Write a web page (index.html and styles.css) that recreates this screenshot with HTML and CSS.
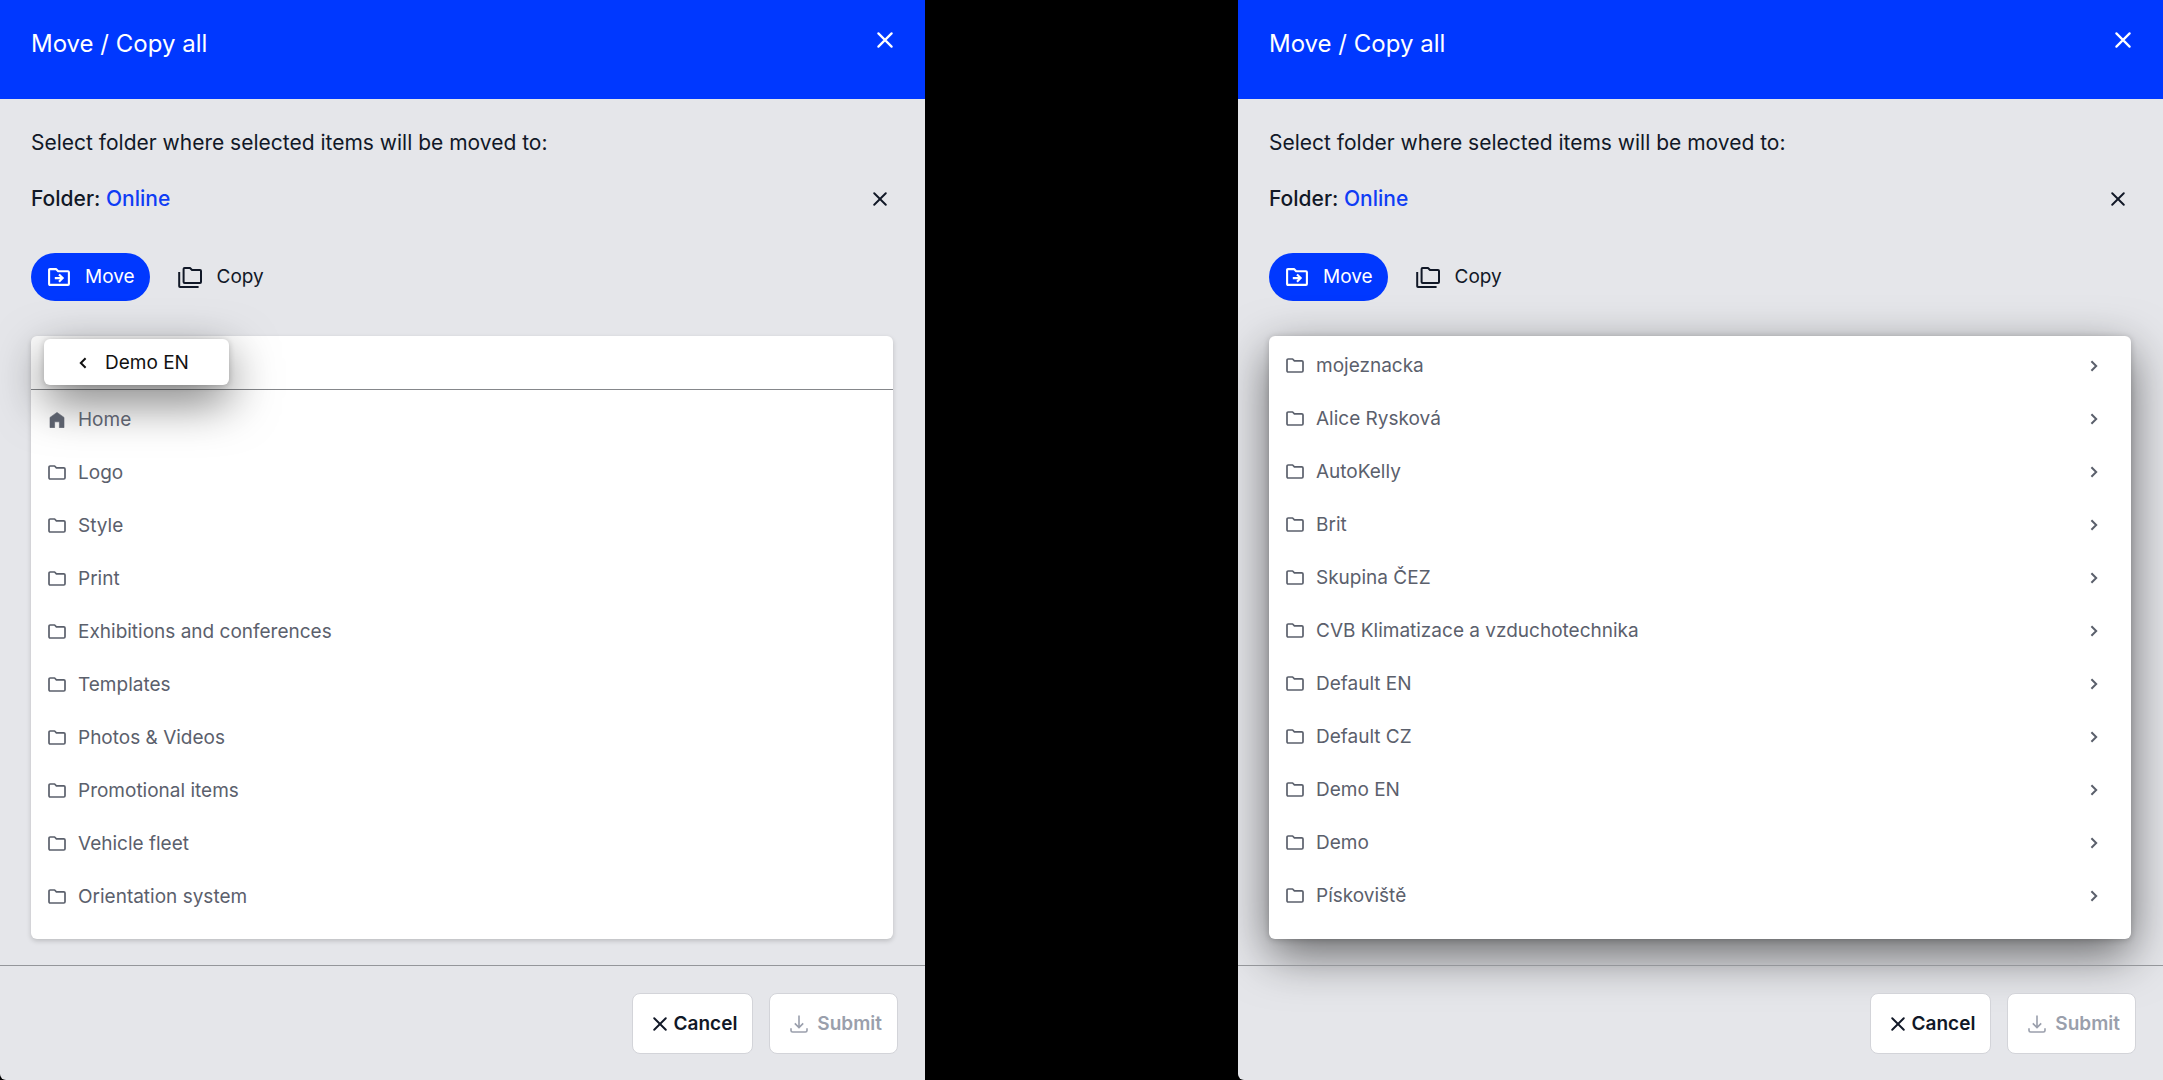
FILE: index.html
```html
<!DOCTYPE html>
<html lang="en">
<head>
<meta charset="utf-8">
<meta name="viewport" content="width=device-width, initial-scale=1">
<title>Move / Copy all</title>
<link rel="stylesheet" href="styles.css">
</head>
<body>
<svg class="sprite" aria-hidden="true">
  <symbol id="folder" viewBox="0 0 18 15"><path d="M1 2.2Q1 1 2.2 1H6.6L8.4 2.8H15.8Q17 2.8 17 4V12.8Q17 14 15.8 14H2.2Q1 14 1 12.8Z" fill="none" stroke="currentColor" stroke-width="1.7" stroke-linejoin="round"/></symbol>
  <symbol id="home" viewBox="0 0 16 16"><path d="M8 .4 15 5.4V15.7H10.4V9.8H5.6V15.7H1V5.4Z" fill="currentColor" stroke="currentColor" stroke-width=".6" stroke-linejoin="round"/></symbol>
  <symbol id="close" viewBox="0 0 16 16"><path d="M1.4 1.4 14.6 14.6M14.6 1.4 1.4 14.6" fill="none" stroke="currentColor" stroke-width="2.2" stroke-linecap="round"/></symbol>
  <symbol id="next" viewBox="0 0 8 12"><path d="M1.4 1.2 6.2 6 1.4 10.8" fill="none" stroke="currentColor" stroke-width="2"/></symbol>
  <symbol id="back" viewBox="0 0 8 12"><path d="M6.6 1.2 1.8 6 6.6 10.8" fill="none" stroke="currentColor" stroke-width="2"/></symbol>
  <symbol id="move" viewBox="0 0 22 18"><path d="M1.1 2Q1.1 1.1 2 1.1H8L10.2 3.3H20Q20.9 3.3 20.9 4.2V16Q20.9 16.9 20 16.9H2Q1.1 16.9 1.1 16Z" fill="none" stroke="currentColor" stroke-width="2.1" stroke-linejoin="round"/><path d="M6.8 10.1H14M11 6.4 14.7 10.1 11 13.8" fill="none" stroke="currentColor" stroke-width="2.1"/></symbol>
  <symbol id="copy" viewBox="0 0 24 21"><path d="M5.6 2Q5.6 1 6.6 1H12L14 3H22Q23 3 23 4V15Q23 16 22 16H6.6Q5.6 16 5.6 15Z" fill="none" stroke="currentColor" stroke-width="2" stroke-linejoin="round"/><path d="M1.2 5V19.2Q1.2 20 2 20H20.6" fill="none" stroke="currentColor" stroke-width="2"/></symbol>
  <symbol id="download" viewBox="0 0 18 18"><path d="M9 .6V12.4M4.8 8.4 9 12.6 13.2 8.4M1 13.2V15.4Q1 17 2.6 17H15.4Q17 17 17 15.4V13.2" fill="none" stroke="currentColor" stroke-width="1.6"/></symbol>
</svg>
<main class="screens">
  <section class="dialog" aria-label="Folder contents">
    <header class="dialog-header">
      <h1>Move / Copy all</h1>
      <button class="close" aria-label="Close"><svg class="i16"><use href="#close"/></svg></button>
    </header>
    <div class="dialog-body">
      <p class="prompt">Select folder where selected items will be moved to:</p>
      <div class="target">
        <p>Folder: <a href="#">Online</a></p>
        <button class="clear" aria-label="Clear folder"><svg class="i14"><use href="#close"/></svg></button>
      </div>
      <div class="modes">
        <button class="mode mode-active"><svg class="i-move"><use href="#move"/></svg>Move</button>
        <button class="mode"><svg class="i-copy"><use href="#copy"/></svg>Copy</button>
      </div>
      <div class="card">
        <div class="card-top">
          <button class="back"><svg class="i-chevron"><use href="#back"/></svg>Demo EN</button>
        </div>
        <ul class="folders">
          <li><a href="#"><svg class="i-home"><use href="#home"/></svg><span>Home</span></a></li>
          <li><a href="#"><svg class="i-folder"><use href="#folder"/></svg><span>Logo</span></a></li>
          <li><a href="#"><svg class="i-folder"><use href="#folder"/></svg><span>Style</span></a></li>
          <li><a href="#"><svg class="i-folder"><use href="#folder"/></svg><span>Print</span></a></li>
          <li><a href="#"><svg class="i-folder"><use href="#folder"/></svg><span>Exhibitions and conferences</span></a></li>
          <li><a href="#"><svg class="i-folder"><use href="#folder"/></svg><span>Templates</span></a></li>
          <li><a href="#"><svg class="i-folder"><use href="#folder"/></svg><span>Photos &amp; Videos</span></a></li>
          <li><a href="#"><svg class="i-folder"><use href="#folder"/></svg><span>Promotional items</span></a></li>
          <li><a href="#"><svg class="i-folder"><use href="#folder"/></svg><span>Vehicle fleet</span></a></li>
          <li><a href="#"><svg class="i-folder"><use href="#folder"/></svg><span>Orientation system</span></a></li>
        </ul>
      </div>
    </div>
    <footer class="dialog-footer">
      <button class="action"><svg class="i14"><use href="#close"/></svg>Cancel</button>
      <button class="action action-submit" disabled><svg class="i-download"><use href="#download"/></svg>Submit</button>
    </footer>
  </section>

  <section class="dialog" aria-label="All folders">
    <header class="dialog-header">
      <h1>Move / Copy all</h1>
      <button class="close" aria-label="Close"><svg class="i16"><use href="#close"/></svg></button>
    </header>
    <div class="dialog-body">
      <p class="prompt">Select folder where selected items will be moved to:</p>
      <div class="target">
        <p>Folder: <a href="#">Online</a></p>
        <button class="clear" aria-label="Clear folder"><svg class="i14"><use href="#close"/></svg></button>
      </div>
      <div class="modes">
        <button class="mode mode-active"><svg class="i-move"><use href="#move"/></svg>Move</button>
        <button class="mode"><svg class="i-copy"><use href="#copy"/></svg>Copy</button>
      </div>
      <div class="card card-raised">
        <ul class="folders">
          <li><a href="#"><svg class="i-folder"><use href="#folder"/></svg><span>mojeznacka</span><svg class="i-chevron"><use href="#next"/></svg></a></li>
          <li><a href="#"><svg class="i-folder"><use href="#folder"/></svg><span>Alice Rysková</span><svg class="i-chevron"><use href="#next"/></svg></a></li>
          <li><a href="#"><svg class="i-folder"><use href="#folder"/></svg><span>AutoKelly</span><svg class="i-chevron"><use href="#next"/></svg></a></li>
          <li><a href="#"><svg class="i-folder"><use href="#folder"/></svg><span>Brit</span><svg class="i-chevron"><use href="#next"/></svg></a></li>
          <li><a href="#"><svg class="i-folder"><use href="#folder"/></svg><span>Skupina ČEZ</span><svg class="i-chevron"><use href="#next"/></svg></a></li>
          <li><a href="#"><svg class="i-folder"><use href="#folder"/></svg><span>CVB Klimatizace a vzduchotechnika</span><svg class="i-chevron"><use href="#next"/></svg></a></li>
          <li><a href="#"><svg class="i-folder"><use href="#folder"/></svg><span>Default EN</span><svg class="i-chevron"><use href="#next"/></svg></a></li>
          <li><a href="#"><svg class="i-folder"><use href="#folder"/></svg><span>Default CZ</span><svg class="i-chevron"><use href="#next"/></svg></a></li>
          <li><a href="#"><svg class="i-folder"><use href="#folder"/></svg><span>Demo EN</span><svg class="i-chevron"><use href="#next"/></svg></a></li>
          <li><a href="#"><svg class="i-folder"><use href="#folder"/></svg><span>Demo</span><svg class="i-chevron"><use href="#next"/></svg></a></li>
          <li><a href="#"><svg class="i-folder"><use href="#folder"/></svg><span>Pískoviště</span><svg class="i-chevron"><use href="#next"/></svg></a></li>
        </ul>
      </div>
    </div>
    <footer class="dialog-footer">
      <button class="action"><svg class="i14"><use href="#close"/></svg>Cancel</button>
      <button class="action action-submit" disabled><svg class="i-download"><use href="#download"/></svg>Submit</button>
    </footer>
  </section>
</main>
</body>
</html>
```
FILE: styles.css
```css
* { box-sizing: border-box; }

body {
  margin: 0;
  background: #000;
  color: #111827;
  font: 19px/24px Inter, "Liberation Sans", sans-serif;
}

h1, p, ul { margin: 0; padding: 0; font-weight: 400; }
ul { list-style: none; }
a { color: inherit; text-decoration: none; }
svg { display: block; flex: none; }

button {
  display: flex;
  align-items: center;
  margin: 0;
  padding: 0;
  border: 0;
  background: none;
  color: inherit;
  font: inherit;
}

.sprite { position: absolute; width: 0; height: 0; }
.i14 { width: 14px; height: 14px; }
.i16 { width: 16px; height: 16px; }
.i-folder { width: 18px; height: 15px; }
.i-home { width: 18px; height: 16px; }
.i-chevron { width: 8px; height: 12px; }
.i-move { width: 22px; height: 18px; }
.i-copy { width: 24px; height: 21px; }
.i-download { width: 18px; height: 18px; }

.screens {
  display: grid;
  grid-template-columns: 1fr 1fr;
  gap: 313px;
  min-height: 100vh;
}

.dialog {
  display: flex;
  flex-direction: column;
  overflow: hidden;
  border-radius: 0 0 0 6px;
  background: #e5e6ea;
}

.dialog-header {
  display: flex;
  justify-content: space-between;
  align-items: flex-start;
  height: 99px;
  padding: 28px 32px 0 31px;
  background: #0038ff;
  color: #fff;
}

.dialog-header h1 { font-size: 24px; line-height: 32px; }
.close { padding: 4px 0; }

.dialog-body {
  display: flex;
  flex: 1;
  flex-direction: column;
  padding: 28px 32px 26px 31px;
  font-size: 21px;
  line-height: 32px;
}

.target {
  display: flex;
  justify-content: space-between;
  align-items: center;
  margin-top: 24px;
  padding-right: 6px;
}

.target p { font-weight: 500; }
.target a { color: #0f3df5; }

.modes {
  display: flex;
  gap: 28px;
  margin: 38px 0 35px;
}

.mode {
  gap: 15px;
  height: 48px;
  font-size: 19px;
}

.mode-active {
  padding: 0 15px 0 17px;
  border-radius: 24px;
  background: #0038ff;
  color: #fff;
}

.card {
  flex: 1;
  padding-bottom: 16px;
  border-radius: 6px;
  background: #fff;
  color: #5b606c;
  font-size: 19px;
  line-height: 24px;
  box-shadow: 0 2px 5px rgba(0, 0, 0, .18);
}

.card-raised,
.back { box-shadow: 0 16px 48px rgba(0, 0, 0, .55), 0 1px 6px rgba(0, 0, 0, .2); }

.card-top {
  padding: 3px 13px 4px;
  border-bottom: 1px solid #85878b;
}

.back {
  gap: 18px;
  height: 46px;
  padding: 2px 40px 0 35px;
  border-radius: 6px;
  background: #fff;
  color: #111;
}

.folders { padding-top: 3px; }

.folders a {
  display: flex;
  align-items: center;
  gap: 12px;
  height: 53px;
  padding: 0 33px 0 17px;
}

.folders span { flex: 1; }

.dialog-footer {
  display: flex;
  justify-content: flex-end;
  gap: 16px;
  padding: 27px 27px 26px;
  border-top: 1px solid #94969a;
}

.action {
  gap: 7px;
  height: 61px;
  padding: 0 15px 0 20px;
  border: 1px solid #d3d4d9;
  border-radius: 8px;
  background: #fff;
  font-weight: 600;
}

.action-submit {
  gap: 9px;
  color: #9a9fac;
}
```
